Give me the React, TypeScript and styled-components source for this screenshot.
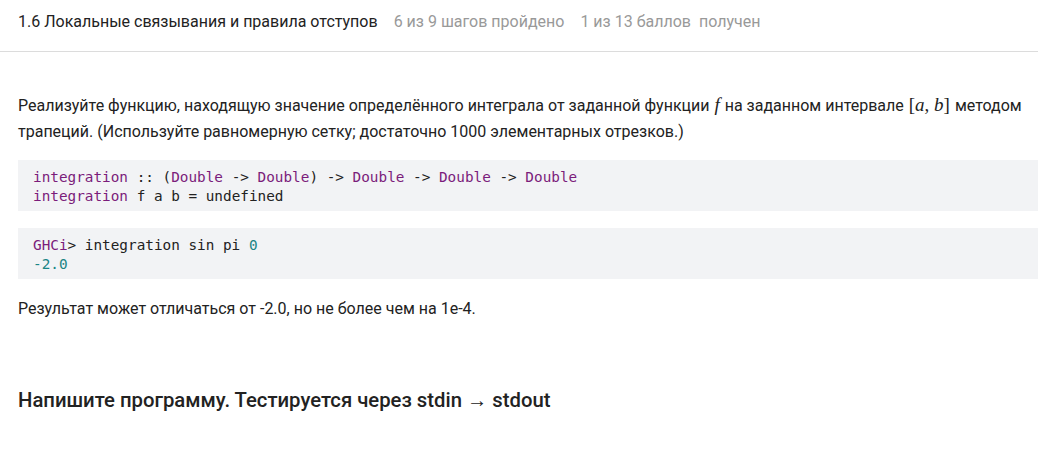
import styled, { createGlobalStyle } from "styled-components";

const GlobalStyle = createGlobalStyle`
  body {
    margin: 0;
    background: #fff;
    font-family: Roboto, "Noto Sans", sans-serif;
    color: #222;
  }
`;

const Header = styled.header`
  display: flex;
  align-items: center;
  gap: 16px;
  height: 52px;
  box-sizing: border-box;
  padding: 0 18px 8px;
  border-bottom: 1px solid #dcdcdc;
  font-size: 16px;
`;

const Title = styled.span`
  color: #222;
`;

const Meta = styled.span`
  color: #999;
  font-size: 16px;
  white-space: pre;
`;

const Content = styled.main`
  padding: 41px 0 0 18px;
`;

const Text = styled.p<{ $gap?: number }>`
  margin: 0 0 ${({ $gap = 16 }) => $gap}px;
  font-size: 16px;
  line-height: 26px;
  padding-right: 12px;
`;

const Math = styled.span`
  font-family: "Liberation Serif", "DejaVu Serif", serif;
  font-size: 19px;
  line-height: 1;
  padding: 0 1px;
`;

const Var = styled.i`
  font-style: italic;
`;

const Code = styled.pre`
  margin: 0 0 17px;
  background: #f2f3f5;
  padding: 8px 15px 5px;
  font-family: "DejaVu Sans Mono", "Liberation Mono", monospace;
  font-size: 14.35px;
  line-height: 19px;
  color: #222;
`;

const Tok = styled.span<{ $kind: "type" | "num" }>`
  color: ${({ $kind }) => ($kind === "type" ? "#7b1c7b" : "#1b8585")};
`;

const Heading = styled.h2`
  margin: 65px 0 0;
  font-size: 20.3px;
  font-weight: 500;
  line-height: 26px;
`;

export default function App() {
  return (
    <>
      <GlobalStyle />
      <Header>
        <Title>1.6 Локальные связывания и правила отступов</Title>
        <Meta>6 из 9 шагов пройдено</Meta>
        <Meta>1 из 13 баллов  получен</Meta>
      </Header>
      <Content>
        <Text $gap={15}>
          Реализуйте функцию, находящую значение определённого интеграла от
          заданной функции{" "}
          <Math>
            <Var>f</Var>
          </Math>{" "}
          на заданном интервале{" "}
          <Math>
            [<Var>a</Var>, <Var>b</Var>]
          </Math>{" "}
          методом трапеций. (Используйте равномерную сетку; достаточно 1000
          элементарных отрезков.)
        </Text>
        <Code>
          <Tok $kind="type">integration</Tok> :: (<Tok $kind="type">Double</Tok>{" "}
          -&gt; <Tok $kind="type">Double</Tok>) -&gt;{" "}
          <Tok $kind="type">Double</Tok> -&gt; <Tok $kind="type">Double</Tok>{" "}
          -&gt; <Tok $kind="type">Double</Tok>
          {"\n"}
          <Tok $kind="type">integration</Tok> f a b = undefined
        </Code>
        <Code>
          <Tok $kind="type">GHCi</Tok>&gt; integration sin pi{" "}
          <Tok $kind="num">0</Tok>
          {"\n"}
          <Tok $kind="num">-2.0</Tok>
        </Code>
        <Text>Результат может отличаться от -2.0, но не более чем на 1e-4.</Text>
        <Heading>Напишите программу. Тестируется через stdin → stdout</Heading>
      </Content>
    </>
  );
}
